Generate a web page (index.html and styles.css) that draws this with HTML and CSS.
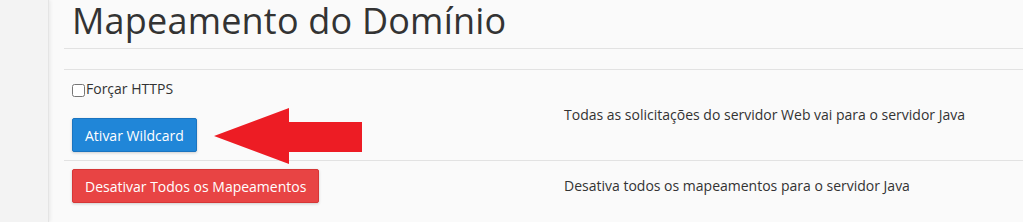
FILE: index.html
```html
<!DOCTYPE html>
<html lang="pt">
<head>
<meta charset="utf-8">
<title>Mapeamento do Domínio</title>
<link rel="stylesheet" href="styles.css">
</head>
<body>
<div class="layout">
  <aside class="sidebar"></aside>
  <main class="main">
    <h1 class="title">Mapeamento do Domínio</h1>
    <div class="spacer"></div>
    <div class="row row-first">
      <div class="cell-left">
        <label class="check"><input type="checkbox">Forçar HTTPS</label>
        <button class="btn btn-blue">Ativar Wildcard</button>
      </div>
      <div class="cell-desc">Todas as solicitações do servidor Web vai para o servidor Java</div>
    </div>
    <div class="row">
      <div class="cell-left">
        <button class="btn btn-red">Desativar Todos os Mapeamentos</button>
      </div>
      <div class="cell-desc">Desativa todos os mapeamentos para o servidor Java</div>
    </div>
    <svg class="arrow" width="149" height="57" viewBox="0 0 149 57" aria-hidden="true">
      <polygon points="0,28 75,0 75,14 148,14 148,44 75,44 75,56" fill="#ed1c24"/>
    </svg>
  </main>
</div>
</body>
</html>
```
FILE: styles.css
```css
html, body {
  margin: 0;
  padding: 0;
  background: #fafafa;
  font-family: "Open Sans", "Liberation Sans", sans-serif;
  color: #333;
  height: 100%;
  overflow: hidden;
}

.layout {
  display: flex;
  min-height: 222px;
}

.sidebar {
  width: 48px;
  flex: none;
  background: #f3f3f3;
  border-right: 1px solid #e4e4e4;
  box-shadow: 1px 0 4px rgba(0, 0, 0, 0.08);
}

.main {
  position: relative;
  flex: 1;
  margin-left: 15px;
}

.title {
  margin: 0;
  padding: 1px 0 7px 8px;
  font-size: 36px;
  letter-spacing: 0.2px;
  line-height: 40px;
  font-weight: 400;
  color: #333;
  border-bottom: 1px solid #e2e2e2;
}

.spacer {
  height: 20px;
  border-bottom: 1px solid #e2e2e2;
}

.row {
  display: grid;
  grid-template-columns: 492px 1fr;
  align-items: center;
  border-bottom: 1px solid #e2e2e2;
}

.row:last-of-type {
  border-bottom: none;
}

.cell-left {
  display: flex;
  flex-direction: column;
  align-items: flex-start;
  padding: 8px 8px;
}

.row-first .cell-left {
  padding-top: 9px;
}

.cell-desc {
  padding: 0 8px;
  font-size: 14px;
  line-height: 20px;
  color: #333;
}

.check {
  display: flex;
  align-items: center;
  font-size: 14px;
  line-height: 20px;
  margin-bottom: 19px;
}

.check input {
  margin: 2px 1px 0 0;
  width: 13px;
  height: 13px;
}

.btn {
  font-family: "Open Sans", "Liberation Sans", sans-serif;
  font-size: 14px;
  height: 34px;
  padding: 0 12px;
  color: #fff;
  border-radius: 2px;
  box-shadow: 0 1px 3px rgba(0, 0, 0, 0.18);
  cursor: pointer;
}

.btn-blue {
  background: #2086d8;
  border: 1px solid #1a74c0;
}

.btn-red {
  background: #e84444;
  border: 1px solid #d63636;
}

.arrow {
  position: absolute;
  left: 150px;
  top: 108px;
}
```
